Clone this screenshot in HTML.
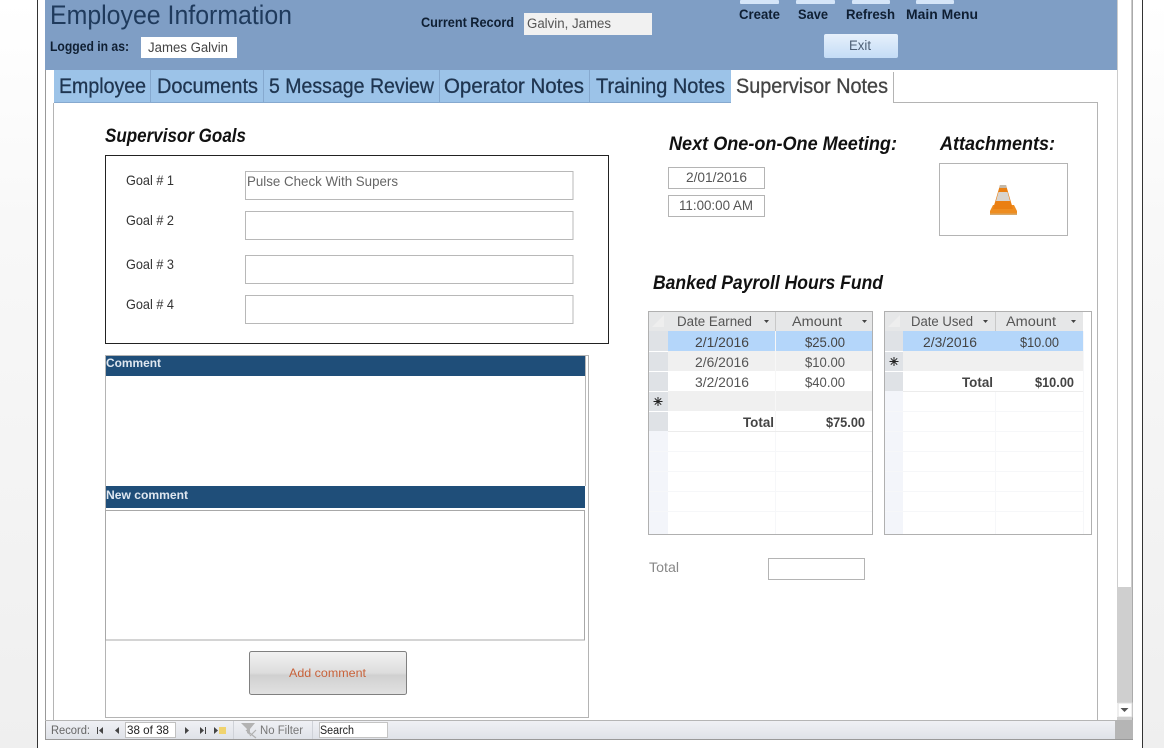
<!DOCTYPE html>
<html><head><meta charset="utf-8"><style>
html,body{margin:0;padding:0;width:1164px;height:748px;overflow:hidden;background:#fff}
svg{display:block;filter:blur(.3px)}
text{font-family:"Liberation Sans",sans-serif;white-space:pre}
.b{font-weight:bold}
.h{font-weight:bold;font-style:italic;font-size:19px;fill:#111}
.t{font-size:21px;fill:#1f3550;stroke:#1f3550;stroke-width:.3px}
.g{font-size:14px;fill:#333}
.d{font-size:14px;fill:#555}
.e{font-size:13.5px;fill:#444}
</style></head><body>
<svg width="1164" height="748" viewBox="0 0 1164 748" xmlns="http://www.w3.org/2000/svg">
<defs>
<linearGradient id="side" x1="0" y1="0" x2="0" y2="1"><stop offset="0" stop-color="#fff"/><stop offset=".3" stop-color="#f8f8f8"/><stop offset="1" stop-color="#efefef"/></linearGradient>
<linearGradient id="exit" x1="0" y1="0" x2="0" y2="1"><stop offset="0" stop-color="#e6f0fb"/><stop offset="1" stop-color="#c4dcf6"/></linearGradient>
<linearGradient id="btn" x1="0" y1="0" x2="0" y2="1"><stop offset="0" stop-color="#f2f2f2"/><stop offset=".5" stop-color="#dcdcdc"/><stop offset=".55" stop-color="#d0d0d0"/><stop offset="1" stop-color="#e2e2e2"/></linearGradient>
<linearGradient id="nav" x1="0" y1="0" x2="0" y2="1"><stop offset="0" stop-color="#f0f1f5"/><stop offset="1" stop-color="#dfe2e8"/></linearGradient>
</defs>

<!-- window surround -->
<rect x="0" y="0" width="37" height="748" fill="url(#side)"/>
<rect x="1143" y="0" width="21" height="748" fill="url(#side)"/>
<rect x="37" y="0" width="1" height="748" fill="#333"/>
<rect x="1142" y="0" width="1" height="748" fill="#333"/>
<rect x="45" y="0" width="1" height="740" fill="#999"/>
<rect x="1132" y="0" width="1" height="740" fill="#aaa"/>
<rect x="45" y="739" width="1088" height="1" fill="#999"/>

<!-- header -->
<rect x="45" y="0" width="1072" height="70" fill="#7f9ec5"/>
<text x="50" y="24" font-size="27" fill="#1f3a5c" textLength="242" lengthAdjust="spacingAndGlyphs">Employee Information</text>
<text x="421" y="27" class="b" font-size="14" fill="#0f1f33" textLength="93" lengthAdjust="spacingAndGlyphs">Current Record</text>
<rect x="524" y="13" width="128" height="22" fill="#f1f1f1"/>
<text x="527" y="28" class="e" style="fill:#555" textLength="84" lengthAdjust="spacingAndGlyphs">Galvin, James</text>
<text x="50" y="51" class="b" font-size="14" fill="#0f1f33" textLength="79" lengthAdjust="spacingAndGlyphs">Logged in as:</text>
<rect x="141" y="37" width="96" height="21" fill="#fff"/>
<text x="148" y="52" class="e" textLength="80" lengthAdjust="spacingAndGlyphs">James Galvin</text>

<rect x="740" y="0" width="39" height="4" rx="1" fill="#d5e5f8"/>
<rect x="796" y="0" width="39" height="4" rx="1" fill="#d5e5f8"/>
<rect x="852" y="0" width="38" height="4" rx="1" fill="#d5e5f8"/>
<rect x="916" y="0" width="38" height="4" rx="1" fill="#d5e5f8"/>
<text x="739" y="19" class="b" font-size="14" fill="#0f1f33" textLength="41" lengthAdjust="spacingAndGlyphs">Create</text>
<text x="798" y="19" class="b" font-size="14" fill="#0f1f33" textLength="30" lengthAdjust="spacingAndGlyphs">Save</text>
<text x="846" y="19" class="b" font-size="14" fill="#0f1f33" textLength="49" lengthAdjust="spacingAndGlyphs">Refresh</text>
<text x="906" y="19" class="b" font-size="14" fill="#0f1f33" textLength="72" lengthAdjust="spacingAndGlyphs">Main Menu</text>
<rect x="824" y="34" width="74" height="24" rx="2" fill="url(#exit)"/>
<text x="849" y="50" class="e" style="fill:#4d5f75" textLength="22" lengthAdjust="spacingAndGlyphs">Exit</text>

<!-- tabs -->
<rect x="54" y="70" width="677" height="32" fill="#9cc3e8"/>
<path d="M150.500 70V102M263.500 70V102M439.500 70V102M589.500 70V102" stroke="#86a9cf"/>
<path d="M54 102.500H731" stroke="#86a9cf" fill="none"/>
<text x="59" y="93" class="t" textLength="87" lengthAdjust="spacingAndGlyphs">Employee</text>
<text x="157" y="93" class="t" textLength="101" lengthAdjust="spacingAndGlyphs">Documents</text>
<text x="269" y="93" class="t" textLength="165" lengthAdjust="spacingAndGlyphs">5 Message Review</text>
<text x="444" y="93" class="t" textLength="140" lengthAdjust="spacingAndGlyphs">Operator Notes</text>
<text x="596" y="93" class="t" textLength="129" lengthAdjust="spacingAndGlyphs">Training Notes</text>
<text x="736" y="93" class="t" style="fill:#444;stroke:#444" textLength="152" lengthAdjust="spacingAndGlyphs">Supervisor Notes</text>

<!-- tab pane border -->
<path d="M53.500 103V720M893.500 72V102.500H1097.500V720" fill="none" stroke="#b4b4b4"/>

<!-- supervisor goals -->
<text x="105" y="142" class="h" textLength="141" lengthAdjust="spacingAndGlyphs">Supervisor Goals</text>
<rect x="105.500" y="155.500" width="503" height="188" fill="#fff" stroke="#222"/>
<text x="126" y="185" class="g" textLength="48" lengthAdjust="spacingAndGlyphs">Goal # 1</text>
<text x="126" y="225" class="g" textLength="48" lengthAdjust="spacingAndGlyphs">Goal # 2</text>
<text x="126" y="269" class="g" textLength="48" lengthAdjust="spacingAndGlyphs">Goal # 3</text>
<text x="126" y="309" class="g" textLength="48" lengthAdjust="spacingAndGlyphs">Goal # 4</text>
<g fill="#fff" stroke="#b8b8b8">
<rect x="245.500" y="171.500" width="327.500" height="28"/>
<rect x="245.500" y="211.500" width="327.500" height="28"/>
<rect x="245.500" y="255.500" width="327.500" height="28"/>
<rect x="245.500" y="295.500" width="327.500" height="28"/>
</g>
<text x="247" y="186" class="d" style="fill:#666" textLength="151" lengthAdjust="spacingAndGlyphs">Pulse Check With Supers</text>

<!-- comments -->
<rect x="105.500" y="355.500" width="483" height="362" fill="#fff" stroke="#b4b4b4"/>
<rect x="106" y="356" width="479" height="20" fill="#1f4e79"/>
<rect x="106" y="486" width="479" height="22" fill="#1f4e79"/>
<path d="M585.500 356V486" stroke="#b8b8b8"/>
<text x="106" y="367" class="b" font-size="12" fill="#dfe7f0" textLength="55" lengthAdjust="spacingAndGlyphs">Comment</text>
<text x="106" y="499" class="b" font-size="12" fill="#dfe7f0" textLength="82" lengthAdjust="spacingAndGlyphs">New comment</text>
<rect x="105.500" y="510.500" width="479" height="129.500" fill="#fff" stroke="#a8a8a8"/>
<rect x="249.500" y="651.500" width="157" height="43" rx="2" fill="url(#btn)" stroke="#808080"/>
<text x="289" y="677" font-size="12" fill="#c8623a" textLength="77" lengthAdjust="spacingAndGlyphs">Add comment</text>

<!-- next meeting -->
<text x="669" y="150" class="h" textLength="228" lengthAdjust="spacingAndGlyphs">Next One-on-One Meeting:</text>
<text x="940" y="150" class="h" textLength="115" lengthAdjust="spacingAndGlyphs">Attachments:</text>
<rect x="668.500" y="167.500" width="96" height="21" fill="#fff" stroke="#b4b4b4"/>
<rect x="668.500" y="195.500" width="96" height="21" fill="#fff" stroke="#b4b4b4"/>
<text x="686" y="182" class="d" textLength="61" lengthAdjust="spacingAndGlyphs">2/01/2016</text>
<text x="679" y="210" class="d" textLength="74" lengthAdjust="spacingAndGlyphs">11:00:00 AM</text>
<rect x="939.500" y="163.500" width="128" height="72" fill="#fff" stroke="#b4b4b4"/>

<!-- cone -->
<polygon points="993,205 1014,205 1017,211 1017,215 990,215 990,211" fill="#ee8d20"/>
<rect x="990" y="213.500" width="27" height="1.500" fill="#d8a868"/>
<polygon points="1000,185 1006,185 1013,209 993,209" fill="#ea7f12"/>
<polygon points="998.500,192 1007.500,192 1010,201 996,201" fill="#d8d4cf"/>
<polygon points="1000,185 1006,185 1006.800,188 999.200,188" fill="#c4b8a8"/>

<text x="653" y="289" class="h" textLength="230" lengthAdjust="spacingAndGlyphs">Banked Payroll Hours Fund</text>

<!-- grid 1 -->
<rect x="648" y="311" width="225" height="224" fill="#fff"/>
<rect x="648" y="311" width="225" height="20" fill="#e6e7e8"/>
<rect x="648" y="331" width="20" height="100" fill="#dfe2e6"/>
<rect x="648" y="431" width="20" height="104" fill="#f3f5fa"/>
<rect x="668" y="331" width="205" height="20" fill="#b4d6fa"/>
<rect x="668" y="351" width="205" height="20" fill="#f0f0f0"/>
<rect x="668" y="391" width="205" height="20" fill="#f0f0f0"/>
<g stroke="#f6f7f9">
<path d="M668 451.500H873M668 471.500H873M668 491.500H873M668 511.500H873M648 451.500H668M648 471.500H668M648 491.500H668M648 511.500H668M775.500 431V535"/>
</g>
<g stroke="#fff"><path d="M648 351.500H668M648 371.500H668M648 391.500H668M648 411.500H668"/></g>
<path d="M775.500 311V331" stroke="#c8c8c8"/>
<path d="M775.500 331V431" stroke="#f7f7f7"/>
<path d="M668 431.500H873" stroke="#ececec"/>
<rect x="648.500" y="311.500" width="224" height="223" fill="none" stroke="#b0b0b0"/>
<polygon points="652,327 664,315 664,327" fill="#eeeeee"/>
<text x="677" y="326" class="e" style="fill:#555" textLength="75" lengthAdjust="spacingAndGlyphs">Date Earned</text>
<polygon points="764,320 769,320 766.500,323" fill="#444"/>
<text x="792" y="326" class="e" style="fill:#555" textLength="50" lengthAdjust="spacingAndGlyphs">Amount</text>
<polygon points="862,320 867,320 864.500,323" fill="#444"/>
<text x="695" y="347" class="e" textLength="54" lengthAdjust="spacingAndGlyphs">2/1/2016</text>
<text x="805" y="347" class="e" textLength="40" lengthAdjust="spacingAndGlyphs">$25.00</text>
<text x="695" y="367" class="e" style="fill:#555" textLength="54" lengthAdjust="spacingAndGlyphs">2/6/2016</text>
<text x="805" y="367" class="e" style="fill:#555" textLength="40" lengthAdjust="spacingAndGlyphs">$10.00</text>
<text x="695" y="387" class="e" style="fill:#555" textLength="54" lengthAdjust="spacingAndGlyphs">3/2/2016</text>
<text x="805" y="387" class="e" style="fill:#555" textLength="40" lengthAdjust="spacingAndGlyphs">$40.00</text>
<path d="M658 397V406M653.500 401.500H662.500M654.800 398.300L661.200 404.700M661.200 398.300L654.800 404.700" stroke="#222" stroke-width="1" fill="none"/>
<text x="743" y="427" class="b" font-size="13.500" fill="#444" textLength="31" lengthAdjust="spacingAndGlyphs">Total</text>
<text x="826" y="427" class="b" font-size="13.500" fill="#444" textLength="39" lengthAdjust="spacingAndGlyphs">$75.00</text>

<!-- grid 2 -->
<rect x="884" y="311" width="208" height="224" fill="#fff"/>
<rect x="884" y="311" width="199" height="20" fill="#e6e7e8"/>
<rect x="884" y="331" width="19" height="60" fill="#dfe2e6"/>
<rect x="884" y="391" width="19" height="144" fill="#f3f5fa"/>
<rect x="903" y="331" width="180" height="20" fill="#b4d6fa"/>
<rect x="903" y="351" width="180" height="20" fill="#f0f0f0"/>
<g stroke="#f6f7f9">
<path d="M903 411.500H1083M903 431.500H1083M903 451.500H1083M903 471.500H1083M903 491.500H1083M903 511.500H1083M884 411.500H903M884 431.500H903M884 451.500H903M884 471.500H903M884 491.500H903M884 511.500H903M995.500 391V535M1083.500 331V535"/>
</g>
<path d="M995.500 311V331" stroke="#c8c8c8"/>
<path d="M903 391.500H1083" stroke="#ececec"/>
<g stroke="#fff"><path d="M884 351.500H903M884 371.500H903"/></g>
<rect x="884.500" y="311.500" width="207" height="223" fill="none" stroke="#b0b0b0"/>
<polygon points="888,327 900,315 900,327" fill="#eeeeee"/>
<text x="911" y="326" class="e" style="fill:#555" textLength="62" lengthAdjust="spacingAndGlyphs">Date Used</text>
<polygon points="983,320 988,320 985.500,323" fill="#444"/>
<text x="1006" y="326" class="e" style="fill:#555" textLength="50" lengthAdjust="spacingAndGlyphs">Amount</text>
<polygon points="1071,320 1076,320 1073.500,323" fill="#444"/>
<text x="923" y="347" class="e" textLength="54" lengthAdjust="spacingAndGlyphs">2/3/2016</text>
<text x="1020" y="347" class="e" textLength="39" lengthAdjust="spacingAndGlyphs">$10.00</text>
<path d="M894 357V366M889.500 361.500H898.500M890.800 358.300L897.200 364.700M897.200 358.300L890.800 364.700" stroke="#222" stroke-width="1" fill="none"/>
<text x="962" y="387" class="b" font-size="13.500" fill="#444" textLength="31" lengthAdjust="spacingAndGlyphs">Total</text>
<text x="1035" y="387" class="b" font-size="13.500" fill="#444" textLength="39" lengthAdjust="spacingAndGlyphs">$10.00</text>

<!-- total -->
<text x="649" y="572" class="d" style="fill:#888" textLength="30" lengthAdjust="spacingAndGlyphs">Total</text>
<rect x="768.500" y="558.500" width="96" height="21" fill="#fff" stroke="#b4b4b4"/>

<!-- scrollbar -->
<rect x="1117" y="0" width="15" height="587" fill="#fff"/>
<path d="M1117.500 0V587M1131.500 0V587" stroke="#ccc"/>
<rect x="1117" y="587" width="15" height="116" fill="#cfcfcf"/>
<rect x="1118" y="703" width="14" height="14" fill="#fff" stroke="#ddd"/>
<polygon points="1120.500,708 1128.500,708 1124.500,712" fill="#555"/>
<rect x="1117" y="717" width="15" height="3" fill="#cfcfcf"/>

<!-- nav bar -->
<rect x="46" y="720" width="1069" height="19" fill="url(#nav)"/>
<rect x="45" y="720" width="1070" height="1" fill="#b5b5b5"/>
<rect x="1115" y="720" width="18" height="19" fill="#b5b5b5"/>
<text x="51" y="734" font-size="11.500" fill="#666" textLength="39" lengthAdjust="spacingAndGlyphs">Record:</text>
<rect x="97" y="727" width="1" height="7" fill="#444"/><polygon points="103,727 103,734 99,730.500" fill="#444"/>
<polygon points="119,727 119,734 115,730.500" fill="#444"/>
<rect x="125.500" y="722.500" width="50" height="15" fill="#fff" stroke="#c0c0c0"/>
<text x="127" y="734" font-size="12" fill="#222" textLength="42" lengthAdjust="spacingAndGlyphs">38 of 38</text>
<polygon points="185,727 185,734 189,730.500" fill="#444"/>
<polygon points="200,727 200,734 204,730.500" fill="#444"/><rect x="205" y="727" width="1" height="7" fill="#444"/>
<polygon points="214,727 214,734 218,730.500" fill="#444"/><rect x="219" y="727" width="7" height="7" fill="#f0d36e"/>
<rect x="233" y="721" width="1" height="18" fill="#cfd2d8"/>
<polygon points="241,723 255,723 250,729 250,735 247,733 247,729" fill="#b3b3b3"/>
<path d="M246 730L256 738M256 730L250 736" stroke="#b0b0b0" stroke-width="1.200" fill="none"/>
<text x="260" y="734" font-size="11.500" fill="#777" textLength="43" lengthAdjust="spacingAndGlyphs">No Filter</text>
<rect x="312" y="721" width="1" height="18" fill="#cfd2d8"/>
<rect x="319.500" y="722.500" width="68" height="15" fill="#fff" stroke="#c4c4c4"/>
<text x="320" y="734" font-size="11.500" fill="#222" textLength="34" lengthAdjust="spacingAndGlyphs">Search</text>
</svg>
</body></html>
